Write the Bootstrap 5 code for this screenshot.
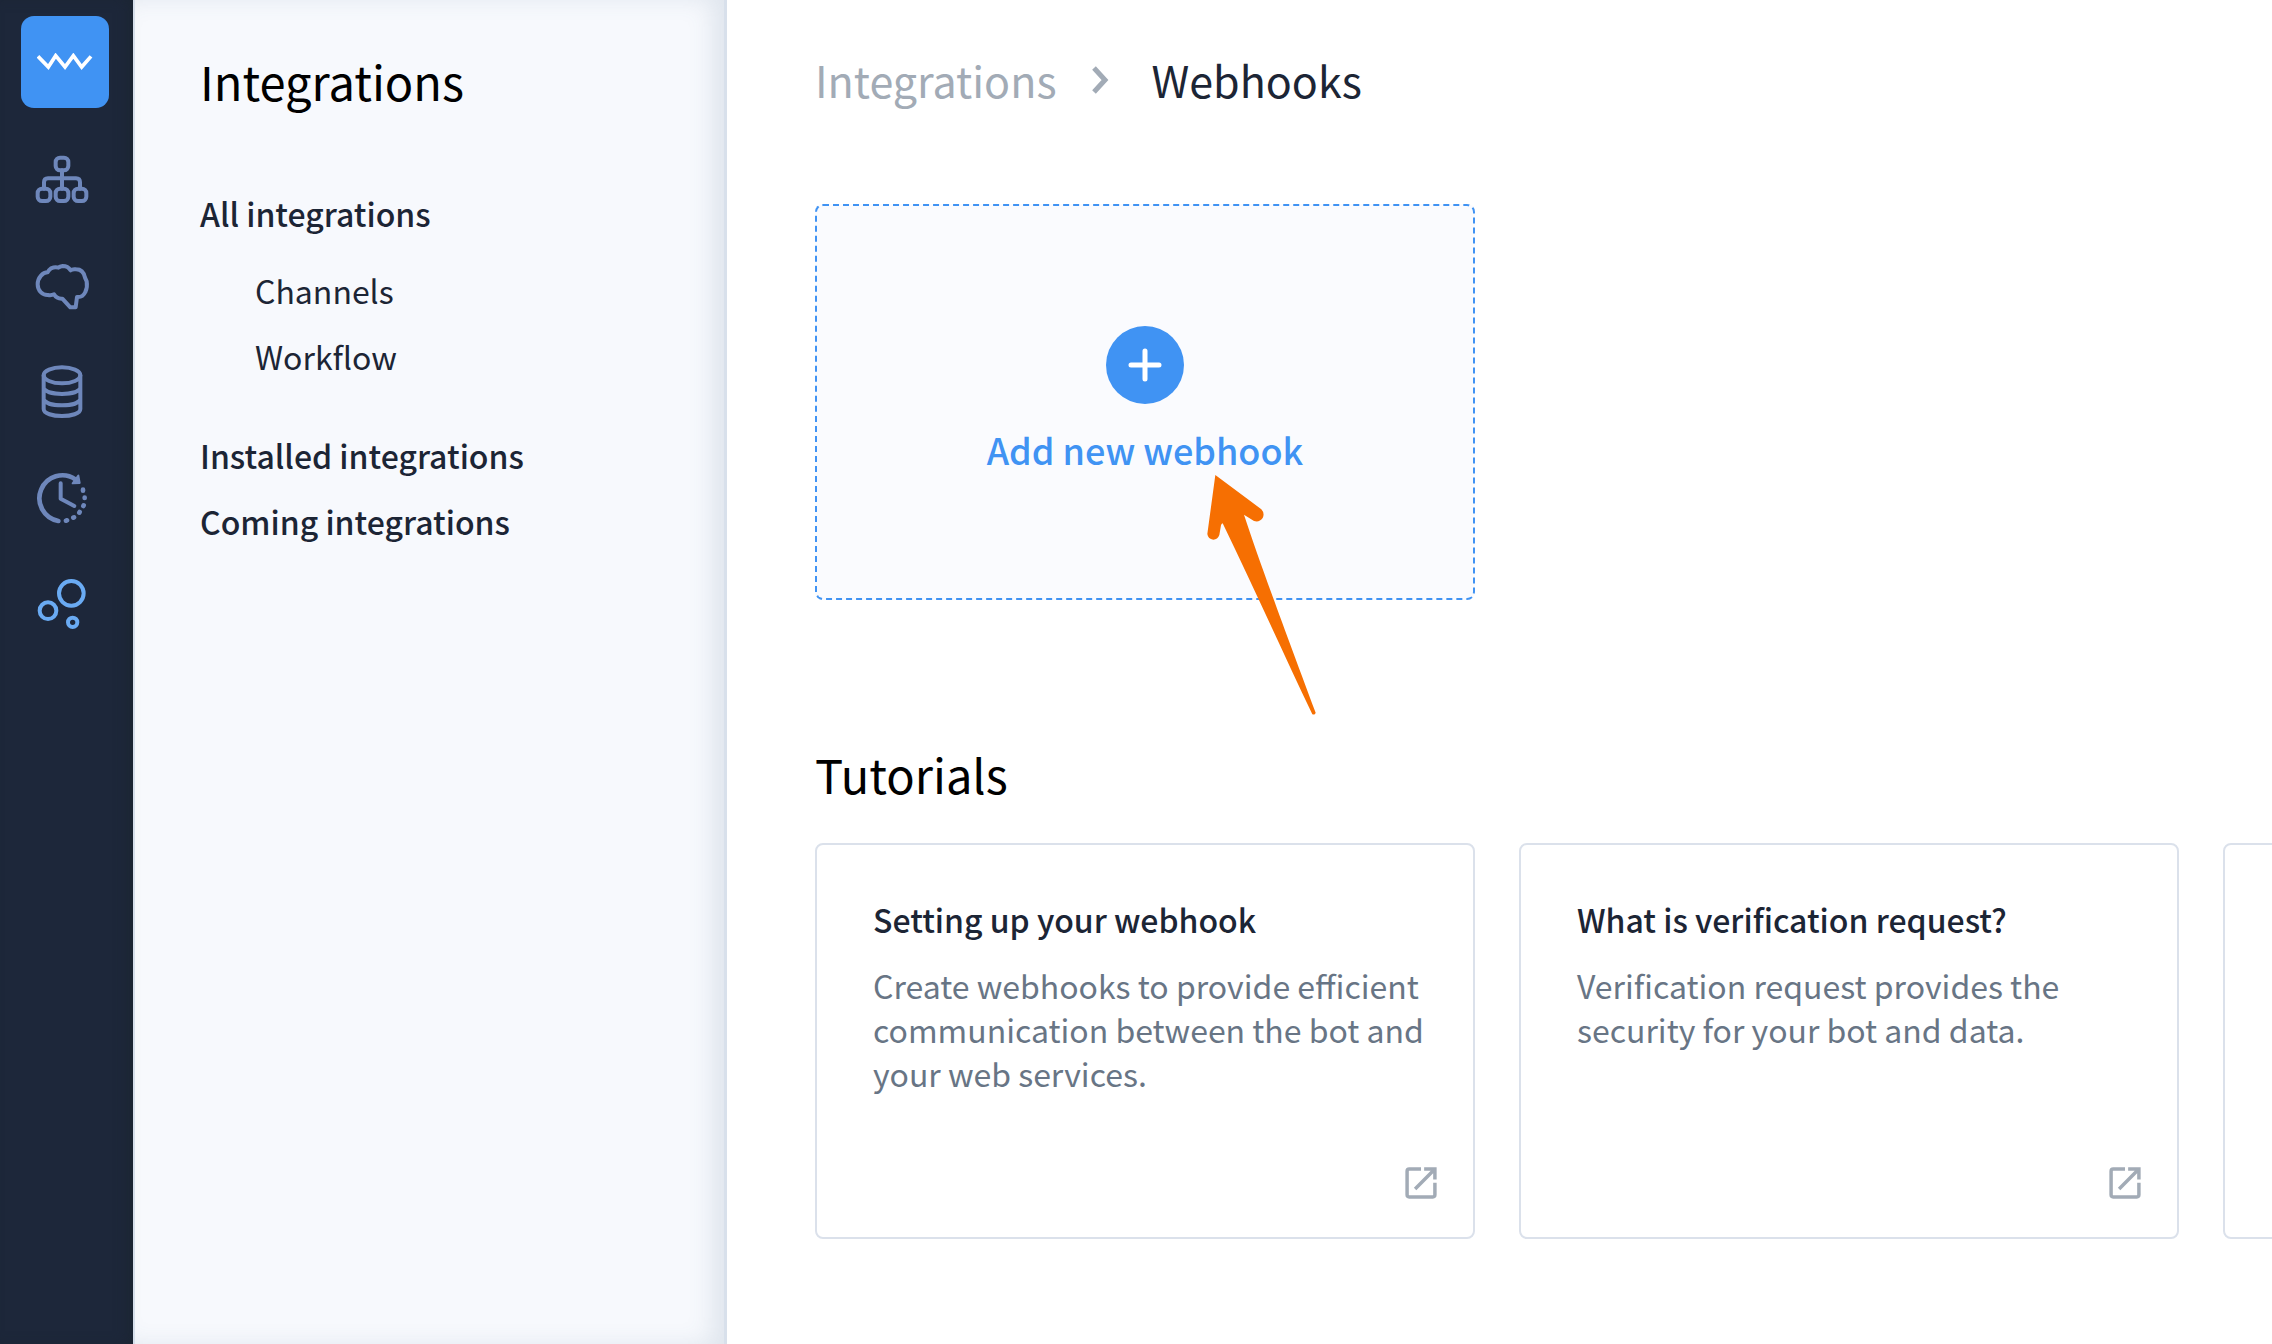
<!DOCTYPE html>
<html lang="en">
<head>
<meta charset="utf-8">
<meta name="viewport" content="width=device-width, initial-scale=1">
<title>Webhooks</title>
<link href="https://cdn.jsdelivr.net/npm/bootstrap@5.3.0/dist/css/bootstrap.min.css" rel="stylesheet">
<style>
  body { font-family: "Noto Sans CJK SC", "Noto Sans", sans-serif; font-size: 32px; line-height: 44px; color: #1c2535; background: #fff; }
  a { color: inherit; text-decoration: none; }
  .rail { width: 133px; background: #1d273a; box-shadow: inset -8px 0 16px -6px #1b2530; padding: 16px 9px 0 0; }
  .rail a { color: #6e87bb; }
  .rail-logo { width: 88px; height: 92px; margin: 0 0 18px 6px; border-radius: 13px; background: #4093f3; }
  .rail-item { height: 106px; }
  .rail-item svg { width: 60px; height: 60px; fill: none; stroke: currentColor; stroke-linecap: round; stroke-linejoin: round; }
  .rail a.is-current { color: #6aabf3; }
  .panel { width: 594px; background: #f7f9fd; border-left: 2px solid #d6dfeb; border-right: 3px solid #d8e0eb; box-shadow: inset -14px 0 24px -2px rgba(70, 100, 130, .13); padding: 48px 48px 0 65px; }
  .section-title { font-size: 47px; line-height: 66px; font-weight: 400; color: #000; margin: 0; }
  .panel .nav { margin-top: 66px; }
  .panel .nav a { display: block; line-height: 66px; }
  .strong-text { font-weight: 500; }
  .sub-nav { padding: 11px 0 33px 55px; }
  .content { min-width: 0; padding: 47px 0 0 88px; }
  .crumbs { font-size: 43px; line-height: 64px; margin-bottom: 93px; }
  .crumbs a { color: #a2abb6; }
  .crumbs svg { width: 17px; height: 30px; margin: 2px 43px 0 35px; }
  .tile { width: 660px; height: 396px; border-radius: 8px; }
  .add-tile { border: 2px dashed #4093f3; background: #fafbfe; color: #4093f3; padding: 120px 0 0; font-size: 36px; line-height: 52px; }
  .add-tile svg { width: 78px; height: 78px; margin-bottom: 19px; }
  .pointer { left: 385px; top: 266px; width: 125px; height: 250px; pointer-events: none; }
  .tutorials-title { margin: 141px 0 36px; }
  .tile-row { gap: 44px; }
  .tutorial { border: 2px solid #dbe1eb; background: #fff; color: #687585; padding: 52px 36px 38px 56px; }
  .tutorial h3 { font-size: 32px; line-height: 44px; color: #1c2535; margin: 0 0 22px; }
  .tutorial svg { width: 32px; height: 32px; }
</style>
</head>
<body>
<div class="d-flex min-vh-100 overflow-hidden">
  <nav class="rail flex-shrink-0 d-flex flex-column align-items-center" aria-label="Main">
    <a href="#" class="rail-logo flex-shrink-0 d-flex align-items-center justify-content-center" aria-label="Home">
      <svg width="56" height="18" viewBox="108 158 168 54" fill="none" stroke="#fff" stroke-width="11"><path d="M111 168 L142 200 L164 166 L192 200 L217 166 L242 200 L270 168"/></svg>
    </a>
    <a href="#" class="rail-item d-flex align-items-center" aria-label="Flows">
      <svg viewBox="96 447 180 180" stroke-width="12"><rect x="167" y="473" width="38" height="38" rx="13"/><rect x="113" y="566" width="38" height="37" rx="13"/><rect x="167" y="566" width="38" height="37" rx="13"/><rect x="221" y="566" width="38" height="37" rx="13"/><path d="M186 511V566M132 566V547Q132 535 144 535H228Q240 535 240 547V566"/></svg>
    </a>
    <a href="#" class="rail-item d-flex align-items-center" aria-label="Training">
      <svg viewBox="96 765 180 180" stroke-width="12"><path d="M143 817C128 817 113 833 113 853C113 872 127 886 144 885Q154 887 162 883Q170 897 187 896L211 922H227L231 891Q248 893 256 876Q263 862 260 844L255 833Q250 808 228 808Q218 806 212 811Q204 798 188 798Q180 799 175 803Q165 800 153 805Q146 810 143 817Z"/></svg>
    </a>
    <a href="#" class="rail-item d-flex align-items-center" aria-label="Data">
      <svg viewBox="96 92 180 180" stroke-width="12"><ellipse cx="186" cy="135" rx="55" ry="24"/><path d="M131 135V236C131 264 241 264 241 236V135M131 173C142 197 230 197 241 173M131 207C142 231 230 231 241 207"/></svg>
    </a>
    <a href="#" class="rail-item d-flex align-items-center" aria-label="History">
      <svg viewBox="96 410 180 180" stroke-width="12"><path d="M175 572A69 69 0 1 1 226 447" stroke-width="14"/><path d="M182 459V505L223 527"/><path d="M235 436L239 458L218 459Z" fill="currentColor" stroke-width="6"/><path d="M249 478V481M254 502V503M251 525L250 527M239 545L238 547M222 561L220 562M201 570L198 571" stroke-width="14"/></svg>
    </a>
    <a href="#" class="rail-item d-flex align-items-center is-current" aria-label="Integrations">
      <svg viewBox="96 727 180 180" stroke-width="12"><circle cx="214" cy="788" r="37"/><circle cx="144" cy="840" r="25"/><circle cx="218" cy="875" r="14"/></svg>
    </a>
  </nav>

  <aside class="panel flex-shrink-0">
    <h1 class="section-title">Integrations</h1>
    <nav class="nav flex-column" aria-label="Integrations">
      <a href="#" class="strong-text">All integrations</a>
      <div class="sub-nav">
        <a href="#">Channels</a>
        <a href="#">Workflow</a>
      </div>
      <a href="#" class="strong-text">Installed integrations</a>
      <a href="#" class="strong-text">Coming integrations</a>
    </nav>
  </aside>

  <main class="content flex-grow-1">
    <nav class="crumbs d-flex align-items-center" aria-label="breadcrumb">
      <a href="#">Integrations</a>
      <svg viewBox="0 0 17 30" fill="none" stroke="#a2abb6" stroke-width="5" aria-hidden="true"><path d="M2 3L13 15L2 27"/></svg>
      <span>Webhooks</span>
    </nav>

    <div class="position-relative">
      <button type="button" class="tile add-tile strong-text d-flex flex-column align-items-center">
        <svg viewBox="0 0 78 78" aria-hidden="true"><circle cx="39" cy="39" r="39" fill="#4093f3"/><path d="M39 25V53M25 39H53" stroke="#fff" stroke-width="5" stroke-linecap="round"/></svg>
        <span>Add new webhook</span>
      </button>
      <svg class="pointer position-absolute" viewBox="720 510 375 750" aria-hidden="true"><path fill="#f66f02" d="M766 525L904 628Q915 640 908 654Q898 668 882 663L852 644C900 790 960 950 1067 1238Q1065 1246 1057 1243C970 1060 880 860 788 670Q784 671 783 676L778 705Q773 719 760 719Q744 717 742 702Z"/></svg>
    </div>

    <h2 class="section-title tutorials-title">Tutorials</h2>
    <div class="tile-row d-flex">
      <a href="#" class="tile tutorial flex-shrink-0 d-flex flex-column">
        <h3 class="strong-text">Setting up your webhook</h3>
        <p class="m-0">Create webhooks to provide efficient communication between the bot and your web services.</p>
        <svg class="mt-auto ms-auto" viewBox="76 80 92 92" fill="none" stroke="#a2abb6" stroke-width="10" aria-hidden="true"><path d="M122 86H88Q82 86 82 92V160Q82 166 88 166H156Q162 166 162 160V125M131 86H162V116M162 86L105 143"/></svg>
      </a>
      <a href="#" class="tile tutorial flex-shrink-0 d-flex flex-column">
        <h3 class="strong-text">What is verification request?</h3>
        <p class="m-0">Verification request provides the security for your bot and data.</p>
        <svg class="mt-auto ms-auto" viewBox="76 80 92 92" fill="none" stroke="#a2abb6" stroke-width="10" aria-hidden="true"><path d="M122 86H88Q82 86 82 92V160Q82 166 88 166H156Q162 166 162 160V125M131 86H162V116M162 86L105 143"/></svg>
      </a>
      <div class="tile tutorial flex-shrink-0"></div>
    </div>
  </main>
</div>
<script src="https://cdn.jsdelivr.net/npm/bootstrap@5.3.0/dist/js/bootstrap.bundle.min.js"></script>
</body>
</html>
